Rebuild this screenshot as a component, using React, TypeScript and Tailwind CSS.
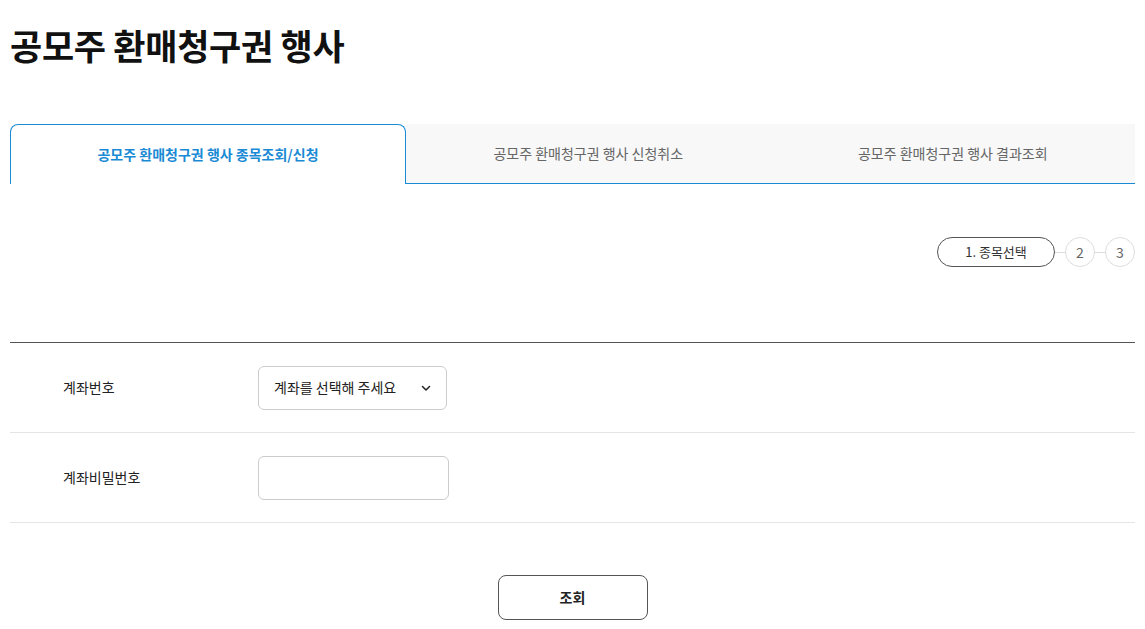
import React, { useState } from 'react';

const tabs = ['공모주 환매청구권 행사 종목조회/신청', '공모주 환매청구권 행사 신청취소', '공모주 환매청구권 행사 결과조회'];

const App: React.FC = () => {
  const [active, setActive] = useState(0);
  const [password, setPassword] = useState('');

  return (
    <div className="w-[1145px] bg-white px-[10px] text-[#222]" style={{ fontFamily: '"Noto Sans CJK KR", "Noto Sans", sans-serif' }}>
      <h1 className="pt-[22px] text-[35px] font-bold leading-[46px] tracking-[-0.3px] text-[#111]">공모주 환매청구권 행사</h1>

      <div className="mt-[56px] flex h-[60px]">
        {tabs.map((tab, i) =>
          i === active ? (
            <button
              key={tab}
              onClick={() => setActive(i)}
              className="w-[396px] rounded-t-[8px] border border-b-0 border-[#1a8ad4] bg-white text-[14px] font-bold text-[#1a8ad4]"
            >
              {tab}
            </button>
          ) : (
            <button
              key={tab}
              onClick={() => setActive(i)}
              className="flex-1 border-b border-[#1a8ad4] bg-[#f8f8f8] text-[14px] text-[#666]"
            >
              {tab}
            </button>
          )
        )}
      </div>

      <div className="mt-[53px] flex items-center justify-end">
        <div className="flex h-[30px] w-[118px] items-center justify-center rounded-full border border-[#555] text-[13px] text-[#333]">
          1. 종목선택
        </div>
        <div className="h-px w-[10px] bg-[#ddd]" />
        <div className="flex h-[30px] w-[30px] items-center justify-center rounded-full border border-[#ddd] text-[14px] text-[#666]">2</div>
        <div className="h-px w-[10px] bg-[#ddd]" />
        <div className="flex h-[30px] w-[30px] items-center justify-center rounded-full border border-[#ddd] text-[14px] text-[#666]">3</div>
      </div>

      <div className="mt-[75px] border-t border-[#555]">
        <div className="flex h-[90px] items-center border-b border-[#e5e5e5]">
          <div className="w-[248px] pl-[53px] text-[14px] text-[#222]">계좌번호</div>
          <button className="flex h-[44px] w-[189px] items-center justify-between rounded-[6px] border border-[#ccc] pl-[15px] pr-[14px] text-[14px] text-[#222]">
            <span>계좌를 선택해 주세요</span>
            <svg width="12" height="12" viewBox="0 0 12 12" fill="none">
              <path d="M2.5 4.5 6 8l3.5-3.5" stroke="#222" strokeWidth="1.5" strokeLinecap="round" strokeLinejoin="round" />
            </svg>
          </button>
        </div>
        <div className="flex h-[90px] items-center border-b border-[#e5e5e5]">
          <div className="w-[248px] pl-[53px] text-[14px] text-[#222]">계좌비밀번호</div>
          <input
            type="password"
            value={password}
            onChange={(e) => setPassword(e.target.value)}
            className="h-[44px] w-[191px] rounded-[6px] border border-[#ccc] px-3 text-[14px] focus:outline-none"
          />
        </div>
      </div>

      <div className="mt-[52px] flex justify-center pb-[9px]">
        <button className="h-[45px] w-[150px] rounded-[8px] border border-[#555] text-[14px] font-bold text-[#222]">조회</button>
      </div>
    </div>
  );
};

export default App;
